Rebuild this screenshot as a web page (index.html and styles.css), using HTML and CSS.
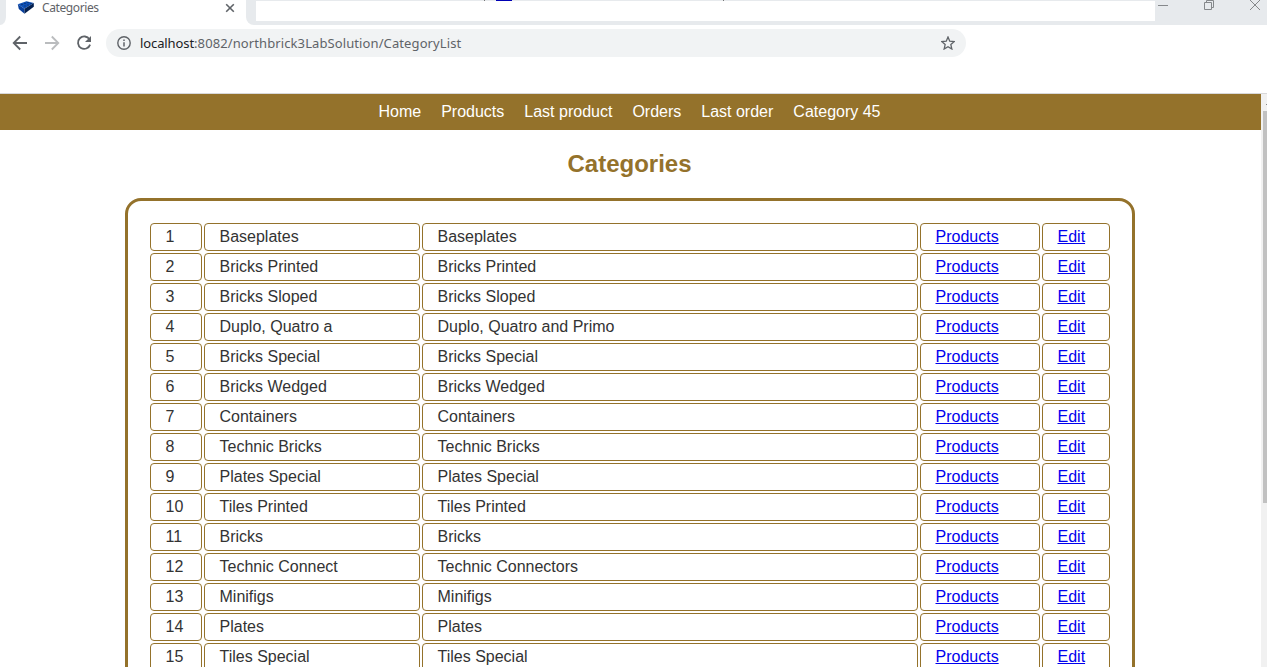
FILE: index.html
```html
<!DOCTYPE html>
<html lang="en">
<head>
<meta charset="utf-8">
<title>Categories</title>
<link rel="stylesheet" href="styles.css">
</head>
<body>
<div class="browser">
  <header class="tabstrip">
    <div class="strip-left"></div>
    <div class="tab">
      <svg class="favicon" width="18" height="14" viewBox="0 0 18 14"><path d="M.8 3.300 9.500.3l7.300 1.700L7.500 7.700z" fill="#0d4fb5"/><path d="M.8 3.300l6.700 4.400v5L1.800 8z" fill="#073f9c"/><path d="M7.500 7.700L16.800 2v3.800L7.500 12.700z" fill="#04204f"/><path d="M4 3.500h2M7 2.500h2M10 1.500h2M7 5h2M10 4h2M13 2.500h2" stroke="#083a86"/></svg>
      <span class="tab-title">Categories</span>
      <svg class="tab-close" width="10" height="10" viewBox="0 0 10 10"><path d="M1.200 1.200l7.600 7.600M8.800 1.200l-7.600 7.600" stroke="#5f6368" stroke-width="1.600"/></svg>
    </div>
    <div class="strip-right">
      <div class="blank">
        <i class="mark mark-a"></i><i class="mark mark-b"></i><i class="mark mark-c"></i>
      </div>
      <svg class="winbtns" width="112" height="25" viewBox="0 0 112 25" fill="none" stroke="#85888b"><path d="M3 5.500h10"/><path d="M49.500 2.500h7v7h-7zM51.500 2.500v-2h7v7h-2"/><path d="M95 0l10 10M105 0L95 10"/></svg>
    </div>
  </header>
  <div class="toolbar">
    <svg class="nav-icons" width="106" height="28" viewBox="0 0 106 28" fill="none" stroke-width="1.800"><path d="M27 14H14M20.200 7.500L13.700 14l6.500 6.500" stroke="#5f6368"/><path d="M45 14h13M51.800 7.500l6.500 6.500-6.500 6.500" stroke="#babcbe"/><path d="M89.500 10.400A6.200 6.200 0 1 0 90.100 15.600" stroke="#5f6368"/><path d="M91 7v6h-6z" fill="#5f6368"/></svg>
    <div class="address">
      <svg class="info" width="14" height="14" viewBox="0 0 14 14"><circle cx="7" cy="7" r="6.200" fill="none" stroke="#5f6368" stroke-width="1.400"/><path d="M7 6.200v4.300M7 3.500v1.500" stroke="#5f6368" stroke-width="1.500"/></svg>
      <span class="url"><b>localhost</b>:8082/northbrick3LabSolution/CategoryList</span>
      <svg class="star" width="14" height="14" viewBox="0 0 14 14"><path d="M7 1l1.750 4.200 4.500.4-3.400 3 1 4.400L7 10.700 3.150 13l1-4.400-3.400-3 4.500-.4z" fill="none" stroke="#5f6368" stroke-width="1.300"/></svg>
    </div>
  </div>
  <div class="viewport">
    <main class="page">
      <nav class="menu"><a>Home</a><a>Products</a><a>Last product</a><a>Orders</a><a>Last order</a><a>Category 45</a></nav>
      <h1>Categories</h1>
      <section class="frame">
        <table class="list">
          <colgroup><col class="c-id"><col class="c-name"><col class="c-desc"><col class="c-prod"><col class="c-edit"></colgroup>
          <tbody>
          <tr><td>1</td><td>Baseplates</td><td>Baseplates</td><td><a href="#">Products</a></td><td><a href="#">Edit</a></td></tr>
          <tr><td>2</td><td>Bricks Printed</td><td>Bricks Printed</td><td><a href="#">Products</a></td><td><a href="#">Edit</a></td></tr>
          <tr><td>3</td><td>Bricks Sloped</td><td>Bricks Sloped</td><td><a href="#">Products</a></td><td><a href="#">Edit</a></td></tr>
          <tr><td>4</td><td>Duplo, Quatro a</td><td>Duplo, Quatro and Primo</td><td><a href="#">Products</a></td><td><a href="#">Edit</a></td></tr>
          <tr><td>5</td><td>Bricks Special</td><td>Bricks Special</td><td><a href="#">Products</a></td><td><a href="#">Edit</a></td></tr>
          <tr><td>6</td><td>Bricks Wedged</td><td>Bricks Wedged</td><td><a href="#">Products</a></td><td><a href="#">Edit</a></td></tr>
          <tr><td>7</td><td>Containers</td><td>Containers</td><td><a href="#">Products</a></td><td><a href="#">Edit</a></td></tr>
          <tr><td>8</td><td>Technic Bricks</td><td>Technic Bricks</td><td><a href="#">Products</a></td><td><a href="#">Edit</a></td></tr>
          <tr><td>9</td><td>Plates Special</td><td>Plates Special</td><td><a href="#">Products</a></td><td><a href="#">Edit</a></td></tr>
          <tr><td>10</td><td>Tiles Printed</td><td>Tiles Printed</td><td><a href="#">Products</a></td><td><a href="#">Edit</a></td></tr>
          <tr><td>11</td><td>Bricks</td><td>Bricks</td><td><a href="#">Products</a></td><td><a href="#">Edit</a></td></tr>
          <tr><td>12</td><td>Technic Connect</td><td>Technic Connectors</td><td><a href="#">Products</a></td><td><a href="#">Edit</a></td></tr>
          <tr><td>13</td><td>Minifigs</td><td>Minifigs</td><td><a href="#">Products</a></td><td><a href="#">Edit</a></td></tr>
          <tr><td>14</td><td>Plates</td><td>Plates</td><td><a href="#">Products</a></td><td><a href="#">Edit</a></td></tr>
          <tr><td>15</td><td>Tiles Special</td><td>Tiles Special</td><td><a href="#">Products</a></td><td><a href="#">Edit</a></td></tr>
          </tbody>
        </table>
      </section>
    </main>
    <div class="scrollbar"><i class="arrow"></i><div class="thumb"></div></div>
  </div>
</div>
</body>
</html>
```
FILE: styles.css
```css
* { box-sizing: border-box; }
body { margin: 0; overflow: hidden; background: #fff; font-family: "Liberation Sans", Arial, sans-serif; }
.browser { width: 1267px; height: 667px; overflow: hidden; display: flex; flex-direction: column; }

.tabstrip { display: flex; height: 25px; flex: none; }
.strip-left { width: 6px; background: #e7eaed; border-bottom-right-radius: 6px 8px; }
.tab { width: 240px; display: flex; align-items: flex-start; padding-left: 11px; font-family: "Noto Sans", sans-serif; }
.favicon { margin-top: 1px; }
.tab-title { margin-left: 7px; width: 183px; font-size: 12px; line-height: 16px; letter-spacing: -0.4px; color: #5f6368; }
.tab-close { margin-top: 3px; flex: none; }
.strip-right { flex: 1; display: flex; background: #e7eaed; border-bottom-left-radius: 8px; padding-left: 10px; }
.blank { position: relative; width: 899px; height: 20px; margin-top: 1px; background: #fff; }
.mark { position: absolute; top: -1px; height: 1px; background: #777; }
.mark-a { left: 228px; width: 1px; }
.mark-b { left: 240px; width: 16px; background: #0000b4; }
.mark-c { left: 467px; width: 1px; }

.toolbar { height: 69px; flex: none; display: flex; align-items: flex-start; padding-top: 4px; border-bottom: 1px solid #d8d8da; }
.address { width: 860px; height: 28px; border-radius: 14px; background: #f1f3f4; display: flex; align-items: center; padding: 0 11px; }
.url { margin-left: 9px; flex: 1; font-family: "Noto Sans", sans-serif; font-size: 13px; line-height: 28px; letter-spacing: 0.1px; color: #5f6368; }
.url b { font-weight: normal; letter-spacing: -0.1px; color: #202124; }

.viewport { flex: 1; display: flex; min-height: 0; }
.page { width: 1261px; overflow: hidden; }
.menu { height: 36px; display: flex; justify-content: center; gap: 20px; background: #94722b; color: #fff; font-size: 16px; line-height: 36px; padding-right: 2px; }
h1 { margin: 20px 0; font-size: 24px; line-height: 28px; text-align: center; color: #94722b; padding-right: 2px; }
.frame { width: 1010px; height: 700px; margin-left: 125px; padding: 20px; border: 3px solid #94722b; border-radius: 16px; }
.list { width: 964px; table-layout: fixed; border-spacing: 2px; color: #333; font-size: 16px; }
.list td { height: 28px; padding: 0 0 0 14.5px; border: 1px solid #94722b; border-radius: 4px; line-height: 26px; white-space: nowrap; }
.list a { color: #0000ee; text-decoration: underline; }
.c-id { width: 52px; }
.c-name { width: 216px; }
.c-desc { width: 496px; }
.c-prod { width: 120px; }
.c-edit { width: 68px; }

.scrollbar { width: 6px; background: #f1f1f1; padding: 17px 0 0 2px; position: relative; }
.arrow { position: absolute; right: 0; top: 10px; width: 1px; height: 1px; background: #888; }
.thumb { height: 392px; background: #c1c1c1; }
```
